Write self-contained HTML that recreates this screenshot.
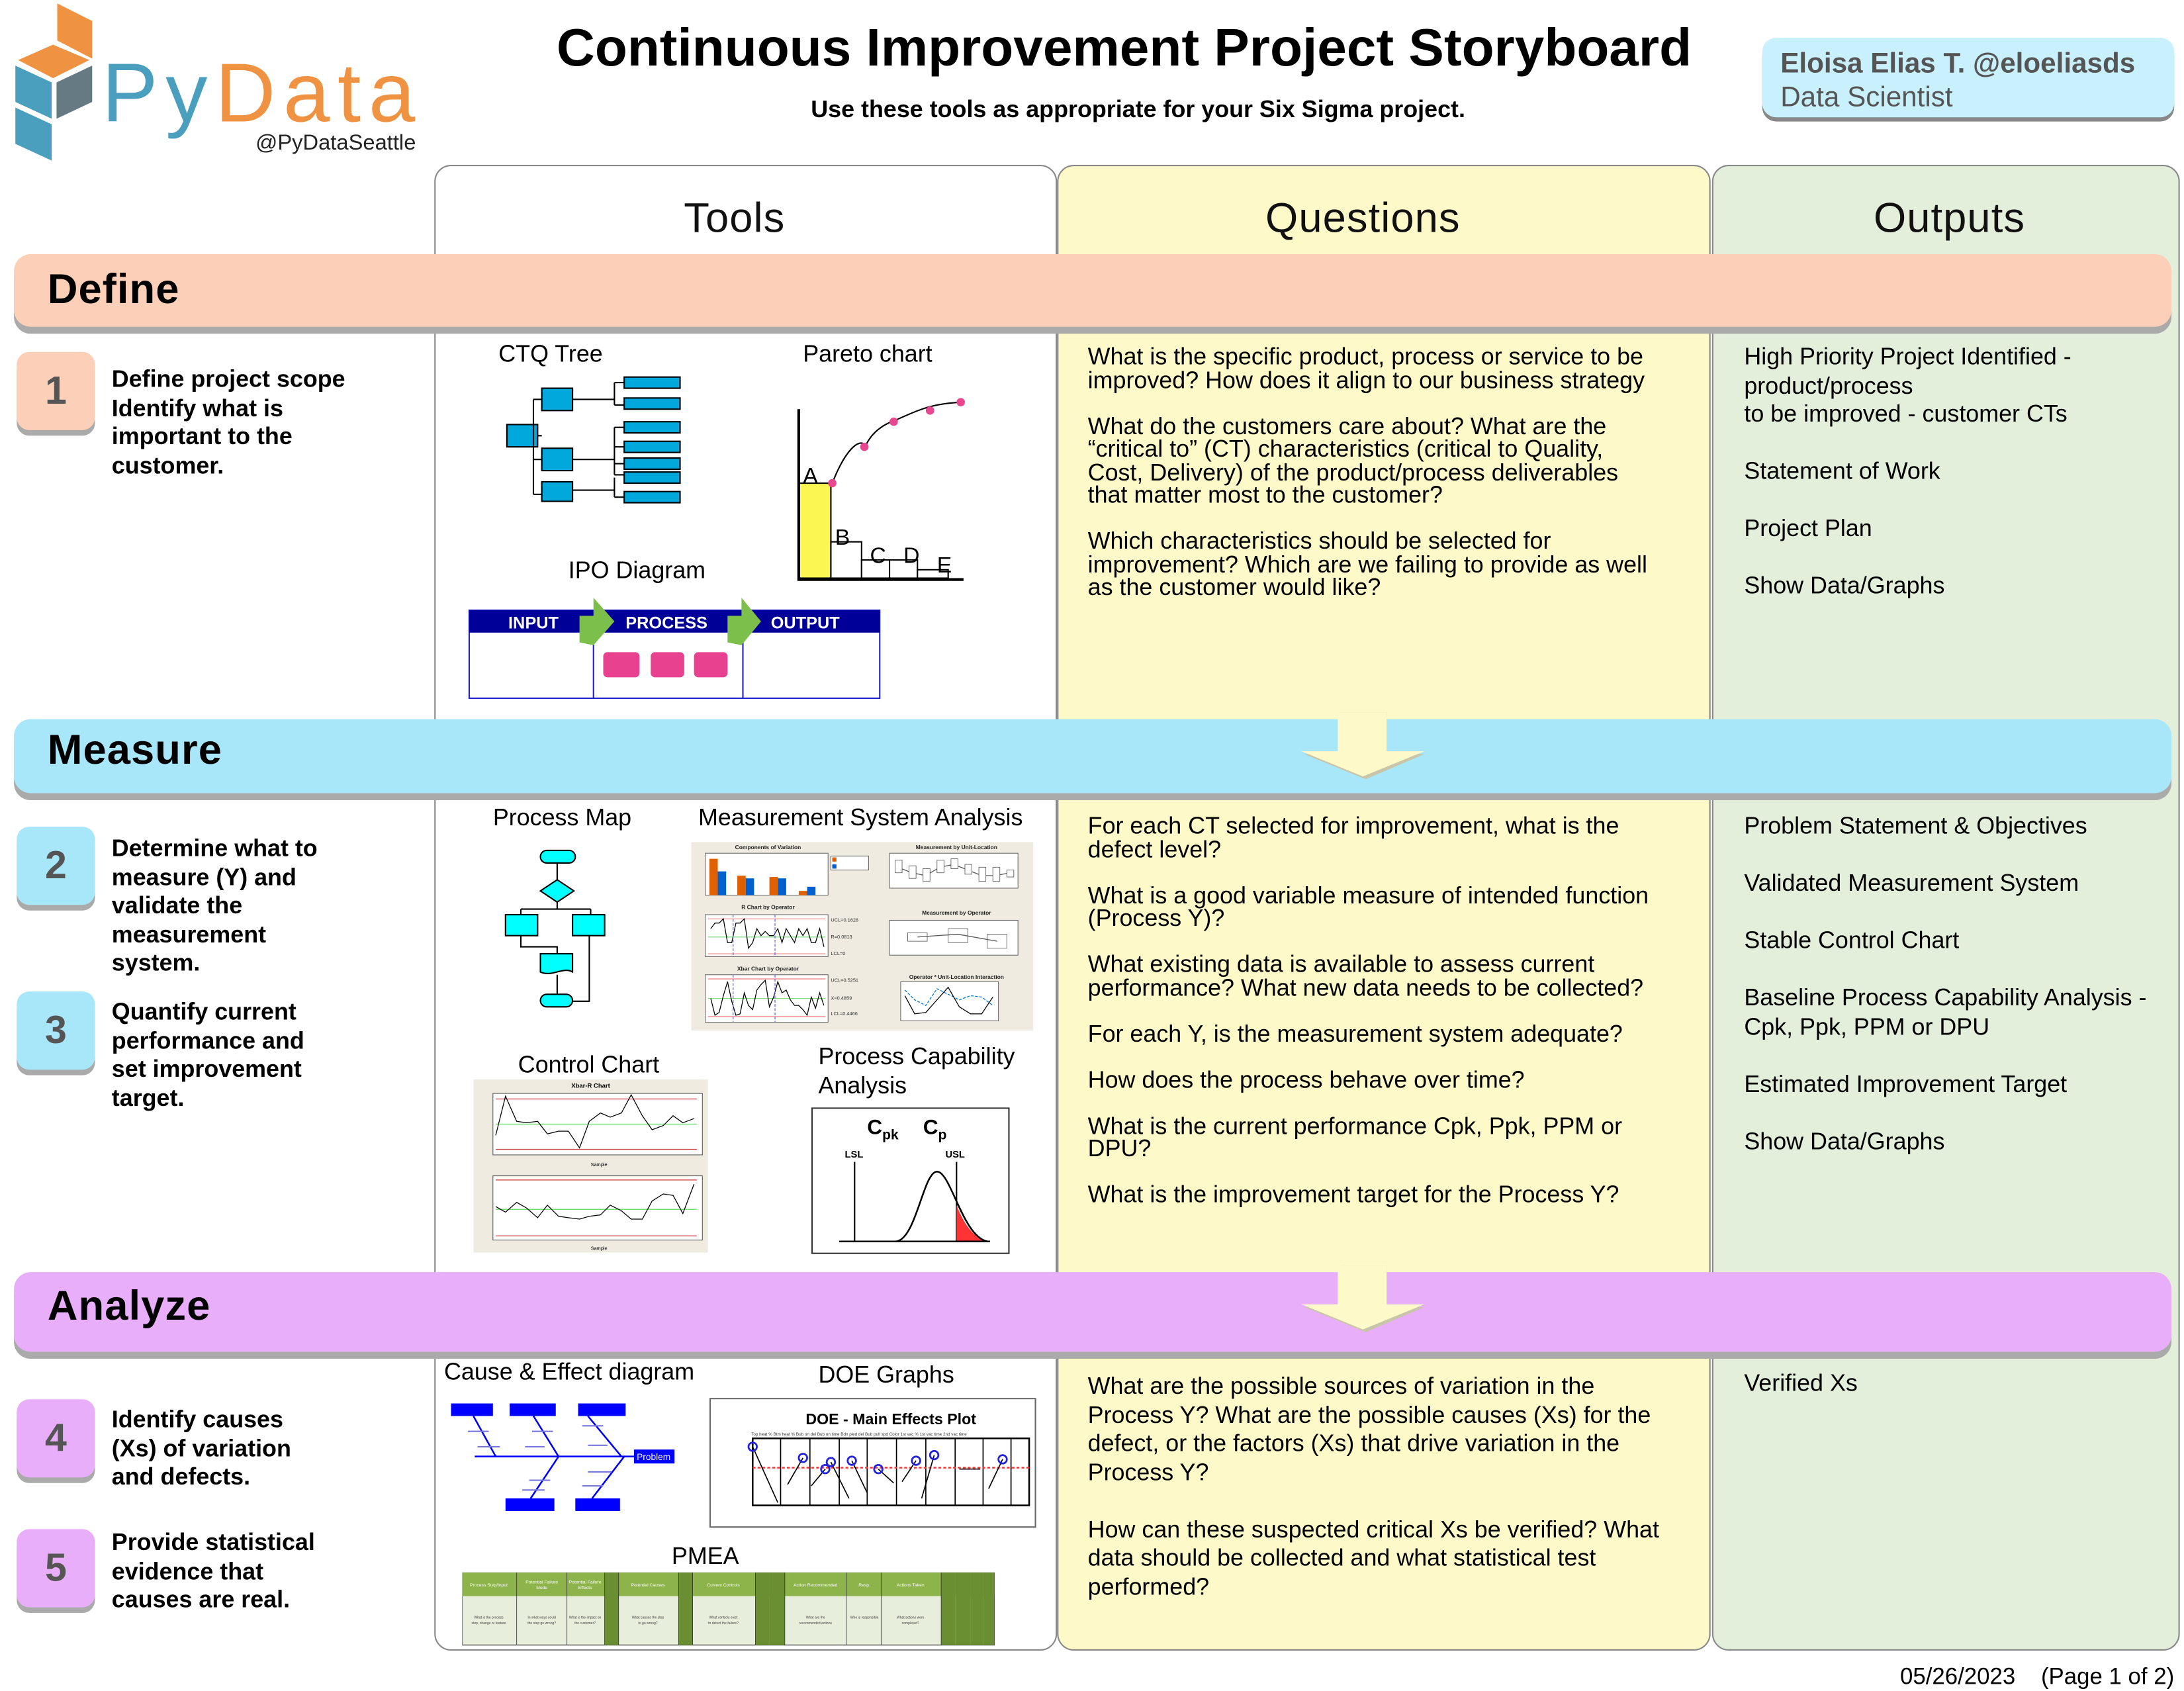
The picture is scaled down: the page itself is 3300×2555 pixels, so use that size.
<!DOCTYPE html>
<html><head><meta charset="utf-8">
<style>
*{margin:0;padding:0;box-sizing:border-box}
html,body{width:3300px;height:2550px;overflow:hidden;background:#fff}
#w{position:absolute;left:0;top:0;width:1564px;height:1209px;transform:scale(2.10997);transform-origin:0 0;font-family:"Liberation Sans",Arial,sans-serif;color:#000}
.a{position:absolute}
.col{position:absolute;top:118px;height:1064px;border:1px solid #888;border-radius:12px 12px 12px 12px}
.hd{position:absolute;top:140px;font-size:30px;font-weight:300;letter-spacing:0.5px;color:#111;text-align:center}
.band{position:absolute;left:10px;width:1545px;border-radius:12px;box-shadow:0 5px 0 #aaa}
.band span{position:absolute;left:24px;font-size:30px;font-weight:bold;letter-spacing:0.5px}
.num{position:absolute;left:12px;width:56px;height:56px;border-radius:9px;box-shadow:0 4px 0 #aaa;font-size:28px;color:#555;text-align:center;line-height:56px;font-weight:bold}
.st{position:absolute;left:80px;font-size:17px;font-weight:bold;line-height:20.5px}
.q{position:absolute;left:779px;width:410px;font-size:17px;line-height:16.5px}
.q p{margin-bottom:16.5px}
.o{position:absolute;left:1249px;width:290px;font-size:17px;line-height:20.5px}
.o p{margin-bottom:20.5px}
.lb{position:absolute;font-size:17px;white-space:nowrap}
</style></head><body><div id="w">

<!-- logo -->
<svg class="a" style="left:0;top:0" width="80" height="120" viewBox="0 0 80 120">
<polygon points="41,2.4 66,15 66,42 41,29" fill="#ef9343"/>
<polygon points="13,43 38,32 64,43 38,56" fill="#ef9343"/>
<polygon points="11,47 37,59 37,85 11,73" fill="#4a9fbf"/>
<polygon points="40.5,59 66,47 66,73 40.5,85" fill="#657a82"/>
<polygon points="11,77 37,89 37,115 11,103" fill="#4a9fbf"/>
</svg>
<div class="a" style="left:73px;top:34px;font-size:60px;letter-spacing:5.5px;line-height:66px;font-weight:300"><span style="color:#4a9fbf">Py</span><span style="color:#ef9343">Data</span></div>
<div class="a" style="left:183px;top:94px;font-size:15.5px;color:#222">@PyDataSeattle</div>

<div class="a" style="left:340px;width:930px;top:14px;text-align:center;font-size:38px;font-weight:bold">Continuous Improvement Project Storyboard</div>
<div class="a" style="left:340px;width:950px;top:69px;text-align:center;font-size:17px;font-weight:bold">Use these tools as appropriate for your Six Sigma project.</div>

<div class="a" style="left:1262px;top:27px;width:295px;height:57px;background:#c9f0fd;border-radius:10px;box-shadow:0 3px 0 #888"></div>
<div class="a" style="left:1275px;top:34px;font-size:20px;font-weight:bold;color:#555;line-height:25px">Eloisa Elias T. @eloeliasds</div>
<div class="a" style="left:1275px;top:58px;font-size:20px;color:#555;line-height:25px">Data Scientist</div>

<!-- columns -->
<div class="col" style="left:311px;width:446px;background:#fff"></div>
<div class="col" style="left:757px;width:468px;background:#fef9c9"></div>
<div class="col" style="left:1226px;width:335px;background:#e3efdb"></div>
<div class="hd" style="left:311px;width:430px">Tools</div>
<div class="hd" style="left:757px;width:438px">Questions</div>
<div class="hd" style="left:1226px;width:340px">Outputs</div>

<!-- bands -->
<div class="band" style="top:182px;height:52px;background:#fccfb8"><span style="top:9px">Define</span></div>
<div class="band" style="top:515px;height:53px;background:#a8e6fa"><span style="top:6px">Measure</span></div>
<div class="band" style="top:911px;height:57px;background:#e9aef9"><span style="top:8px">Analyze</span></div>
<!-- arrows -->
<svg class="a" style="left:928px;top:510px" width="100" height="52" viewBox="0 0 100 52"><polygon points="32,0 65,0 65,30 92,30 50,48 6,30 32,30" fill="#c9c5a8"/><polygon points="30,0 65,0 65,28 92,28 48,46 4,28 30,28" fill="#fef9c9"/></svg>
<svg class="a" style="left:928px;top:906px" width="100" height="52" viewBox="0 0 100 52"><polygon points="32,0 65,0 65,30 92,30 50,48 6,30 32,30" fill="#c9c5a8"/><polygon points="30,0 65,0 65,28 92,28 48,46 4,28 30,28" fill="#fef9c9"/></svg>

<!-- numbers -->
<div class="num" style="top:252px;background:#fccfb8">1</div>
<div class="num" style="top:592px;background:#a8e6fa">2</div>
<div class="num" style="top:710px;background:#a8e6fa">3</div>
<div class="num" style="top:1002px;background:#e9aef9">4</div>
<div class="num" style="top:1095px;background:#e9aef9">5</div>
<div class="st" style="top:262px">Define project scope<br>Identify what is<br>important to the<br>customer.</div>
<div class="st" style="top:598px">Determine what to<br>measure (Y) and<br>validate the<br>measurement<br>system.</div>
<div class="st" style="top:715px">Quantify current<br>performance and<br>set improvement<br>target.</div>
<div class="st" style="top:1007px">Identify causes<br>(Xs) of variation<br>and defects.</div>
<div class="st" style="top:1095px">Provide statistical<br>evidence that<br>causes are real.</div>

<!-- questions -->
<div class="q" style="top:248px"><p>What is the specific product, process or service to be improved? How does it align to our business strategy</p><p>What do the customers care about? What are the “critical to” (CT) characteristics (critical to Quality, Cost, Delivery) of the product/process deliverables that matter most to the customer?</p><p>Which characteristics should be selected for improvement? Which are we failing to provide as well as the customer would like?</p></div>
<div class="q" style="top:584px"><p>For each CT selected for improvement, what is the defect level?</p><p>What is a good variable measure of intended function (Process Y)?</p><p>What existing data is available to assess current performance? What new data needs to be collected?</p><p>For each Y, is the measurement system adequate?</p><p>How does the process behave over time?</p><p>What is the current performance Cpk, Ppk, PPM or DPU?</p><p>What is the improvement target for the Process Y?</p></div>
<div class="q" style="top:983px;line-height:20.5px;width:410px"><p style="margin-bottom:20.5px">What are the possible sources of variation in the Process Y? What are the possible causes (Xs) for the defect, or the factors (Xs) that drive variation in the Process Y?</p><p>How can these suspected critical Xs be verified? What data should be collected and what statistical test performed?</p></div>

<!-- outputs -->
<div class="o" style="top:246px"><p>High Priority Project Identified - product/process<br>to be improved - customer CTs</p><p>Statement of Work</p><p>Project Plan</p><p>Show Data/Graphs</p></div>
<div class="o" style="top:582px"><p>Problem Statement &amp; Objectives</p><p>Validated Measurement System</p><p>Stable Control Chart</p><p>Baseline Process Capability Analysis - Cpk, Ppk, PPM or DPU</p><p>Estimated Improvement Target</p><p>Show Data/Graphs</p></div>
<div class="o" style="top:981px"><p>Verified Xs</p></div>

<!-- tool labels -->
<div class="lb" style="left:357px;top:244px">CTQ Tree</div>
<div class="lb" style="left:575px;top:244px">Pareto chart</div>
<div class="lb" style="left:407px;top:399px">IPO Diagram</div>
<div class="lb" style="left:353px;top:576px">Process Map</div>
<div class="lb" style="left:500px;top:576px">Measurement System Analysis</div>
<div class="lb" style="left:371px;top:753px">Control Chart</div>
<div class="lb" style="left:586px;top:746px;line-height:21px">Process Capability<br>Analysis</div>
<div class="lb" style="left:318px;top:973px">Cause &amp; Effect diagram</div>
<div class="lb" style="left:586px;top:975px">DOE Graphs</div>
<div class="lb" style="left:481px;top:1105px">PMEA</div>

<!-- CTQ tree -->
<svg class="a" style="left:360px;top:266px" width="130" height="100" viewBox="0 0 130 100" stroke="#000" stroke-width="1">
<g fill="#00a8dc">
<rect x="3" y="38" width="22" height="16"/><rect x="28" y="12" width="22" height="16"/><rect x="28" y="55" width="22" height="16"/><rect x="28" y="79" width="22" height="14"/>
<rect x="87" y="4" width="40" height="8"/><rect x="87" y="19" width="40" height="8"/><rect x="87" y="36" width="40" height="8"/><rect x="87" y="50" width="40" height="8"/><rect x="87" y="62" width="40" height="8"/><rect x="87" y="72" width="40" height="8"/><rect x="87" y="86" width="40" height="8"/></g>
<g fill="none"><path d="M25,46H28M22,20V88M22,20H28M22,63H28M22,88H28M50,20H80M80,8V24M80,8H87M80,24H87M50,63H80M80,40V74M80,40H87M80,54H87M80,66H87M80,74H87M50,85H80M80,76V90M80,90H87"/></g>
</svg>
<!-- Pareto -->
<svg class="a" style="left:565px;top:283px" width="130" height="140" viewBox="0 0 130 140">
<rect x="7" y="63" width="23" height="68" fill="#fbf651" stroke="#000"/>
<rect x="30" y="105" width="22" height="26" fill="#fff" stroke="#000"/><rect x="52" y="118" width="20" height="13" fill="#fff" stroke="#000"/><rect x="72" y="118" width="20" height="13" fill="#fff" stroke="#000"/><rect x="92" y="125" width="22" height="6" fill="#fff" stroke="#000"/>
<path d="M7,10V132H125" stroke="#000" stroke-width="2" fill="none"/>
<path d="M31,63C40,40 50,30 55,36C60,25 70,20 76,18C90,12 100,6 124,5" stroke="#000" fill="none"/>
<g fill="#e8468f"><circle cx="31" cy="63" r="3"/><circle cx="54" cy="37" r="3"/><circle cx="75" cy="19" r="3"/><circle cx="101" cy="11" r="3"/><circle cx="123" cy="5" r="3"/></g>
<g font-size="16" font-family="Liberation Sans"><text x="10" y="63">A</text><text x="33" y="107">B</text><text x="58" y="120">C</text><text x="82" y="120">D</text><text x="106" y="127">E</text></g>
</svg>
<!-- IPO -->
<svg class="a" style="left:335px;top:426px" width="300" height="78" viewBox="0 0 300 78">
<rect x="1" y="11" width="294" height="63" fill="#fff" stroke="#22c" stroke-width="1"/>
<rect x="1" y="11" width="294" height="16" fill="#000099"/>
<path d="M90,27V74M197,27V74" stroke="#22c"/>
<polygon points="80,15 90,15 90,2 105,19 90,36 80,34" fill="#7cc04b"/>
<polygon points="186,15 196,15 196,2 210,19 196,36 186,34" fill="#7cc04b"/>
<g fill="#fff" font-weight="bold" font-size="12" font-family="Liberation Sans"><text x="29" y="24">INPUT</text><text x="113" y="24">PROCESS</text><text x="217" y="24">OUTPUT</text></g>
<g fill="#e84190"><rect x="97" y="41" width="26" height="18" rx="3"/><rect x="131" y="41" width="24" height="18" rx="3"/><rect x="162" y="41" width="24" height="18" rx="3"/></g>
</svg>

<!-- Process map -->
<svg class="a" style="left:355px;top:600px" width="90" height="125" viewBox="0 0 90 125" stroke="#000" stroke-width="1">
<rect x="32" y="9" width="25" height="9" rx="4.5" fill="#0ff"/>
<polygon points="44,30 56,38 44,46 32,38" fill="#0ff"/>
<rect x="7" y="55" width="23" height="15" fill="#0ff"/><rect x="55" y="55" width="23" height="15" fill="#0ff"/>
<path d="M32,83H55V96C48,92 40,100 32,96Z" fill="#0ff"/>
<rect x="32" y="112" width="23" height="9" rx="4.5" fill="#0ff"/>
<path d="M44,18V30M44,46V51M18,51H68M18,51V55M68,51V55M18,70V78H44V83M44,98V112M67,70V117H55" fill="none"/>
</svg>
<!-- MSA -->
<svg class="a" style="left:495px;top:603px" width="245" height="135" viewBox="0 0 245 135">
<rect width="245" height="135" fill="#efebe0"/>
<g font-size="4" font-weight="bold" text-anchor="middle" fill="#222"><text x="55" y="5">Components of Variation</text><text x="190" y="5">Measurement by Unit-Location</text><text x="55" y="48">R Chart by Operator</text><text x="190" y="52">Measurement by Operator</text><text x="55" y="92">Xbar Chart by Operator</text><text x="190" y="98">Operator * Unit-Location Interaction</text></g>
<g fill="#fff" stroke="#666" stroke-width="0.5"><rect x="10" y="8" width="88" height="30"/><rect x="142" y="8" width="92" height="25"/><rect x="10" y="52" width="88" height="30"/><rect x="142" y="56" width="92" height="25"/><rect x="10" y="95" width="88" height="34"/><rect x="150" y="100" width="70" height="28"/><rect x="100" y="10" width="27" height="10"/></g>
<g fill="#e06000"><rect x="13" y="12" width="6" height="26"/><rect x="33" y="24" width="6" height="14"/><rect x="56" y="25" width="6" height="13"/><rect x="77" y="35" width="6" height="3"/><rect x="101" y="11" width="3" height="3"/></g>
<g fill="#0060d0"><rect x="19" y="21" width="6" height="17"/><rect x="39" y="26" width="6" height="12"/><rect x="62" y="26" width="6" height="12"/><rect x="83" y="32" width="6" height="6"/><rect x="101" y="16" width="3" height="3"/></g>
<path d="M12,55H96M12,80H96M12,98H96M12,125H96" stroke="#e66" stroke-width="0.5"/>
<path d="M12,68H96M12,112H96" stroke="#6d6" stroke-width="0.5"/>
<path d="M14,62L17,58L20,58L23,55L26,72L29,72L32,58L35,58L38,55L41,76L44,72L47,62L50,67L53,64L56,67L59,67L62,62L65,72L68,62L71,67L74,72L77,62L80,67L83,62L86,72L89,72L92,62L95,75" fill="none" stroke="#000" stroke-width="0.6"/>
<path d="M14,112L17,124L20,122L23,110L26,100L29,114L32,124L35,123L38,108L41,117L44,120L47,106L50,102L53,99L56,118L59,111L62,100L65,108L68,106L71,113L74,117L77,117L80,120L83,124L86,111L89,119L92,108L95,117" fill="none" stroke="#000" stroke-width="0.6"/>
<path d="M30,52V82M60,52V82M30,95V129M60,95V129" stroke="#66f" stroke-width="0.6" stroke-dasharray="2,1"/>
<g font-size="3.5" fill="#333"><text x="100" y="57">UCL=0.1628</text><text x="100" y="69">R=0.0813</text><text x="100" y="81">LCL=0</text><text x="100" y="100">UCL=0.5251</text><text x="100" y="113">X=0.4859</text><text x="100" y="124">LCL=0.4466</text></g>
<path d="M148,18L158,22L168,24L178,18L188,16L198,20L208,24L218,24L228,22" fill="none" stroke="#555" stroke-width="0.6"/>
<g fill="#fff" stroke="#555" stroke-width="0.4"><rect x="146" y="13" width="5" height="9"/><rect x="156" y="17" width="5" height="9"/><rect x="166" y="19" width="5" height="9"/><rect x="176" y="13" width="5" height="9"/><rect x="186" y="12" width="5" height="7"/><rect x="196" y="16" width="5" height="7"/><rect x="206" y="18" width="5" height="10"/><rect x="216" y="18" width="5" height="10"/><rect x="226" y="20" width="5" height="5"/><rect x="155" y="65" width="14" height="6"/><rect x="184" y="62" width="14" height="10"/><rect x="212" y="66" width="14" height="10"/></g>
<path d="M162,68L191,66L219,71" fill="none" stroke="#555" stroke-width="0.6"/>
<path d="M153,106L160,113L168,117L176,105L184,109L192,113L200,110L208,111L216,117" fill="none" stroke="#07c" stroke-width="0.6" stroke-dasharray="2,1"/>
<path d="M153,110L160,123L168,122L176,113L184,104L192,118L200,123L208,123L216,111" fill="none" stroke="#000" stroke-width="0.6"/>
</svg>
<!-- Control chart -->
<svg class="a" style="left:339px;top:773px" width="168" height="124" viewBox="0 0 168 124">
<rect width="168" height="124" fill="#efebe0"/>
<text x="84" y="6" font-size="4.5" font-weight="bold" text-anchor="middle">Xbar-R Chart</text>
<rect x="14" y="10" width="150" height="44" fill="#fff" stroke="#555" stroke-width="0.5"/>
<rect x="14" y="69" width="150" height="46" fill="#fff" stroke="#555" stroke-width="0.5"/>
<path d="M16,14H160M16,50H160M16,72H160M16,112H160" stroke="#c33" stroke-width="0.6"/>
<path d="M16,32H160M16,93H160" stroke="#5d5" stroke-width="0.6"/>
<path d="M16,40L23,12L31,30L38,31L46,30L53,39L61,37L68,37L76,49L83,30L91,24L98,27L106,24L113,11L121,26L128,36L136,33L143,26L150,31L158,28" fill="none" stroke="#000" stroke-width="0.6"/>
<path d="M16,91L23,95L31,88L38,92L46,99L53,90L61,98L68,99L76,100L83,98L91,97L98,90L106,94L113,100L121,100L128,87L136,82L143,83L150,96L158,75" fill="none" stroke="#000" stroke-width="0.6"/>
<g font-size="3.5" text-anchor="middle"><text x="90" y="62">Sample</text><text x="90" y="122">Sample</text></g>
</svg>
<!-- Capability -->
<svg class="a" style="left:581px;top:793px" width="143" height="106" viewBox="0 0 143 106">
<rect x="0.5" y="0.5" width="141" height="104" fill="#fff" stroke="#333"/>
<text x="40" y="19" font-size="15" font-weight="bold" font-family="Liberation Sans">C<tspan font-size="10" dy="4">pk</tspan></text>
<text x="80" y="19" font-size="15" font-weight="bold" font-family="Liberation Sans">C<tspan font-size="10" dy="4">p</tspan></text>
<g font-size="7" font-weight="bold"><text x="24" y="36">LSL</text><text x="96" y="36">USL</text></g>
<path d="M31,39V96M104,39V96" stroke="#000"/>
<path d="M104,70C110,86 118,94 126,96L104,96Z" fill="#f33"/>
<path d="M20,96H128M60,96C75,96 80,46 90,46C100,46 108,92 126,96" fill="none" stroke="#000" stroke-width="1.2"/>
</svg>
<!-- fishbone -->
<svg class="a" style="left:320px;top:1005px" width="170" height="80" viewBox="0 0 170 80" stroke="#00f">
<g fill="#00f" stroke="none"><rect x="3" y="0" width="30" height="9"/><rect x="45" y="0" width="33" height="9"/><rect x="94" y="0" width="34" height="9"/><rect x="42" y="68" width="35" height="9"/><rect x="92" y="68" width="32" height="9"/><rect x="134" y="33" width="29" height="10"/></g>
<text x="136" y="40.5" font-size="6.5" fill="#fff" stroke="none">Problem</text>
<path d="M20,38H135M19,9L35,38M62,9L80,38M101,9L125,38M80,38L60,68M127,38L104,68" stroke-width="1.2" fill="none"/>
<path d="M15,20H30M22,31H38M61,20H76M56,31H70M97,16H112M101,30H115M59,55H74M54,62H70M101,49H118M97,59H112" stroke="#77d" stroke-width="1"/>
</svg>
<!-- DOE -->
<svg class="a" style="left:508px;top:1001px" width="235" height="94" viewBox="0 0 235 94">
<rect x="0.5" y="0.5" width="233" height="92" fill="#fff" stroke="#666" stroke-width="1"/>
<text x="130" y="19" font-size="11" font-weight="bold" text-anchor="middle">DOE - Main Effects Plot</text>
<rect x="31" y="29" width="198" height="48" fill="none" stroke="#000" stroke-width="1.2"/>
<path d="M51,29V77M72,29V77M93,29V77M113,29V77M134,29V77M155,29V77M176,29V77M196,29V77M216,29V77" stroke="#000" stroke-width="0.8"/>
<path d="M31,50H229" stroke="#f33" stroke-width="1.2" stroke-dasharray="2,1.5"/>
<path d="M31,35L49,75M56,62L67,43M73,63L83,51M87,46L100,72M102,45L113,68M121,51L132,61M138,60L148,45M152,72L161,41M179,51H194M200,65L210,44" stroke="#000" stroke-width="0.8" fill="none"/>
<g fill="none" stroke="#22d" stroke-width="1.3"><circle cx="31" cy="35" r="3"/><circle cx="67" cy="43" r="3"/><circle cx="83" cy="51" r="3"/><circle cx="87" cy="46" r="3"/><circle cx="102" cy="45" r="3"/><circle cx="121" cy="51" r="3"/><circle cx="148" cy="45" r="3"/><circle cx="161" cy="41" r="3"/><circle cx="210" cy="44" r="3"/></g>
<text x="30" y="27" font-size="3" fill="#333">Top heat % Btm heat % Bub on del Bub on time Bdn pled del Bub pull spd Color 1st vac % 1st vac time 2nd vac time</text>
</svg>
<!-- PMEA -->
<svg class="a" style="left:331px;top:1126px" width="382" height="53" viewBox="0 0 382 53">
<rect x="0" y="0" width="381" height="52" fill="#e8eedc" stroke="#333" stroke-width="0.6"/>
<rect x="0" y="0" width="381" height="17" fill="#8db44a"/>
<g fill="#6a8e32"><rect x="102" y="0" width="10" height="52"/><rect x="155" y="0" width="10" height="52"/><rect x="210" y="0" width="10" height="52"/><rect x="220" y="0" width="11" height="52"/><rect x="343" y="0" width="10" height="52"/><rect x="353" y="0" width="11" height="52"/><rect x="364" y="0" width="9" height="52"/><rect x="373" y="0" width="8" height="52"/></g>
<path d="M39,0V52M75,0V52M102,0V52M112,0V52M155,0V52M165,0V52M210,0V52M231,0V52M275,0V52M300,0V52M343,0V52" stroke="#333" stroke-width="0.4"/>
<g font-size="3.2" fill="#fff" text-anchor="middle"><text x="19" y="10">Process Step/Input</text><text x="57" y="8">Potential Failure</text><text x="57" y="12">Mode</text><text x="88" y="8">Potential Failure</text><text x="88" y="12">Effects</text><text x="133" y="10">Potential Causes</text><text x="187" y="10">Current Controls</text><text x="253" y="10">Action Recommended</text><text x="288" y="10">Resp.</text><text x="321" y="10">Actions Taken</text></g>
<g font-size="2.4" fill="#444" text-anchor="middle"><text x="19" y="33">What is the process</text><text x="19" y="37">step, change or feature</text><text x="57" y="33">In what ways could</text><text x="57" y="37">the step go wrong?</text><text x="88" y="33">What is the impact on</text><text x="88" y="37">the customer?</text><text x="133" y="33">What causes the step</text><text x="133" y="37">to go wrong?</text><text x="187" y="33">What controls exist</text><text x="187" y="37">to detect the failure?</text><text x="253" y="33">What are the</text><text x="253" y="37">recommended actions</text><text x="288" y="33">Who is responsible</text><text x="321" y="33">What actions were</text><text x="321" y="37">completed?</text></g>
</svg>

<div class="a" style="left:1300px;top:1192px;width:257px;text-align:right;font-size:16.5px">05/26/2023&nbsp;&nbsp;&nbsp;&nbsp;(Page 1 of 2)</div>
</div></body></html>
